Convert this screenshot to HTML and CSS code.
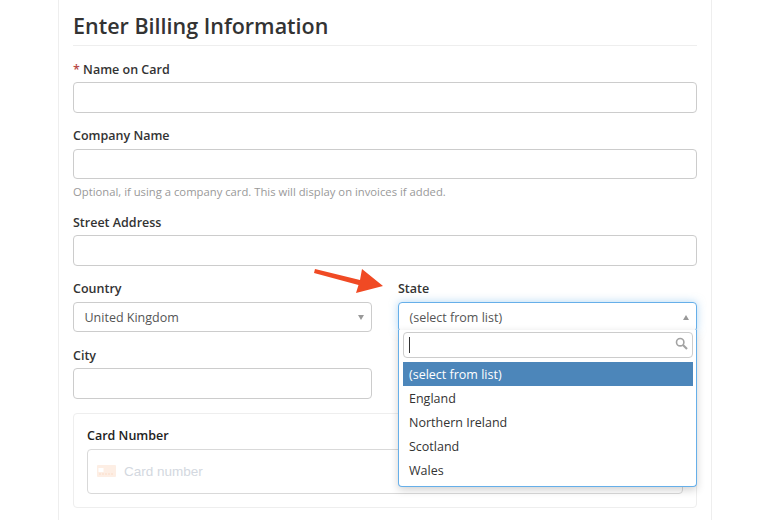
FILE: index.html
```html
<!DOCTYPE html>
<html lang="en">
<head>
<meta charset="utf-8">
<title>Enter Billing Information</title>
<link rel="stylesheet" href="styles.css">
</head>
<body>
<main class="panel">
  <h1 class="title">Enter Billing Information</h1>
  <div class="field">
    <label class="label"><span class="req">*</span> Name on Card</label>
    <div class="input"></div>
  </div>
  <div class="field">
    <label class="label">Company Name</label>
    <div class="input"></div>
    <p class="hint">Optional, if using a company card. This will display on invoices if added.</p>
  </div>
  <div class="field">
    <label class="label">Street Address</label>
    <div class="input"></div>
  </div>
  <div class="cols">
    <div class="col">
      <div class="field">
        <label class="label">Country</label>
        <div class="input select"><span>United Kingdom</span><i class="caret down"></i></div>
      </div>
      <div class="field">
        <label class="label">City</label>
        <div class="input"></div>
      </div>
    </div>
    <div class="col state">
      <div class="field">
        <label class="label">State</label>
        <div class="input select open"><span>(select from list)</span><i class="caret up"></i></div>
      </div>
      <div class="dropdown">
        <div class="search">
          <span class="cursor"></span>
          <svg class="mag" width="13" height="13" viewBox="0 0 13 13"><circle cx="5.200" cy="5.200" r="3.700" fill="none" stroke="#a3a3a3" stroke-width="1.600"/><path d="M8 8l4 4" stroke="#a3a3a3" stroke-width="2.200" fill="none"/></svg>
        </div>
        <ul class="options">
          <li class="option active">(select from list)</li>
          <li class="option">England</li>
          <li class="option">Northern Ireland</li>
          <li class="option">Scotland</li>
          <li class="option">Wales</li>
        </ul>
      </div>
    </div>
  </div>
  <section class="card-box">
    <label class="label card-label">Card Number</label>
    <div class="card-input">
      <svg class="card-icon" width="19" height="12" viewBox="0 0 19 12"><rect width="19" height="12" rx="1" fill="#fdeee4"/><rect x="1.500" y="3" width="5" height="4" fill="#fff"/><path d="M2 9h15" stroke="#fbdcc8" stroke-width="1.200" stroke-dasharray="2 1"/></svg>
      <span class="placeholder">Card number</span>
    </div>
  </section>
</main>
<svg class="arrow" width="72" height="26" viewBox="0 0 72 26"><polygon points="0,5 1,1 46,12 48,1 69,18 42,25 44.500,17" fill="#f04a24"/></svg>
</body>
</html>
```
FILE: styles.css
```css
* { box-sizing: border-box; }
html, body { margin: 0; height: 520px; overflow: hidden; background: #fff; }
body { font-family: "Open Sans", "Liberation Sans", sans-serif; color: #333; position: relative; }
.panel {
  width: 654px;
  height: 520px;
  margin-left: 58px;
  padding: 0 14px;
  border-left: 1px solid #eeeeee;
  border-right: 1px solid #eeeeee;
  overflow: hidden;
}
.title {
  margin: 0 0 14.5px;
  height: 46px;
  padding-top: 9px;
  font-size: 21.5px;
  line-height: 34px;
  font-weight: 600;
  color: #333;
  border-bottom: 1px solid #eeeeee;
}
.field { margin-bottom: 14.5px; }
.label {
  display: block;
  height: 18px;
  margin-bottom: 3.5px;
  font-size: 12.5px;
  line-height: 18px;
  font-weight: 600;
  color: #333;
}
.req { color: #b94a48; }
.input {
  height: 30.67px;
  border: 1px solid #ccc;
  border-radius: 4px;
  background: #fff;
}
.hint {
  margin: 4px 0 -0.2px;
  height: 16px;
  font-size: 11.27px;
  line-height: 17px;
  color: #999;
}
.cols { display: flex; gap: 26px; }
.col { width: 299px; position: relative; }
.select {
  display: flex;
  align-items: center;
  justify-content: space-between;
  padding: 1px 7px 0 10.5px;
  font-size: 12.5px;
  color: #555;
}
.open {
  border-color: #66afe9;
  box-shadow: 0 0 8px rgba(102, 175, 233, .5);
}
.caret { width: 0; height: 0; border-left: 3px solid transparent; border-right: 3px solid transparent; }
.caret.down { border-top: 5px solid #999; }
.caret.up { border-bottom: 5px solid #999; }
.dropdown {
  position: absolute;
  top: 50px;
  left: 0;
  width: 299px;
  height: 157px;
  padding: 2px 3.500px 0 4px;
  background: #fff;
  border: 1px solid #66afe9;
  border-top: 0;
  border-radius: 0 0 4px 4px;
  box-shadow: 0 3px 8px rgba(0, 0, 0, .18);
}
.search {
  position: relative;
  height: 26px;
  border: 1px solid #ccc;
  border-radius: 4px;
  margin-bottom: 4px;
}
.cursor { position: absolute; left: 4.500px; top: 4px; width: 1px; height: 16px; background: #333; }
.mag { position: absolute; right: 4px; top: 4px; }
.options { list-style: none; margin: 0; padding: 0; }
.option {
  height: 24px;
  padding: 1px 0 0 6px;
  font-size: 12.5px;
  line-height: 24px;
  color: #333;
}
.option.active { background: #4c86ba; color: #fff; }
.card-box {
  margin-top: -0.63px;
  height: 95px;
  padding: 13px 13px 0;
  border: 1px solid #eeeeee;
  border-radius: 4px;
}
.card-label { color: #222; margin-bottom: 4px; }
.card-input {
  display: flex;
  align-items: center;
  gap: 8px;
  height: 45px;
  padding-left: 9px;
  border: 1px solid #d9d9d9;
  border-radius: 4px;
}
.card-icon { flex: none; }
.placeholder { font-family: "Liberation Sans", Arial, sans-serif; font-size: 13.5px; color: #d3d8e0; }
.arrow { position: absolute; left: 314px; top: 268px; }
```
